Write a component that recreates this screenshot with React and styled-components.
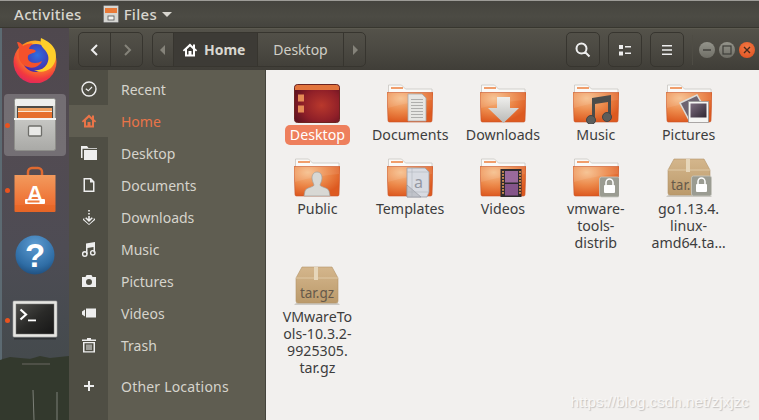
import React from 'react';
import styled, { createGlobalStyle } from 'styled-components';

const Global = createGlobalStyle`
  html, body { margin: 0; padding: 0; width: 759px; height: 420px; overflow: hidden; background: #f2f0ee; }
  * { box-sizing: border-box; }
  body { font-family: "Noto Sans", "DejaVu Sans", sans-serif; }
`;

const Screen = styled.div`
  position: relative; width: 759px; height: 420px; display: flex; flex-direction: column; overflow: hidden;
`;
const TopBar = styled.div`
  height: 28px; flex: none; display: flex; align-items: center; padding: 0 0 0 14px;
  background: linear-gradient(#45443f, #4c4b44 60%, #45443e);
  border-top: 1px solid #9d9c98; border-bottom: 1px solid #38372f;
  color: #d8d6cf; font-size: 15px; font-weight: 500; letter-spacing: .3px;
`;
const TopLabel = styled.span` margin-right: ${p => p.$gap || 0}px; `;
const TopIcon = styled.svg` margin-right: 5px; flex: none; `;
const Caret = styled.span`
  width: 0; height: 0; margin-left: 5px; border: 5px solid transparent; border-top: 5px solid #d8d6cf; border-bottom: 0;
`;
const Main = styled.div` flex: 1; display: flex; min-height: 0; `;
const Dock = styled.div`
  position: relative; width: 69px; flex: none; display: flex; flex-direction: column; align-items: center; padding-top: 1px;
  background: linear-gradient(#4f484e 0, #524b52 120px, #4e4c54 220px, #474b50 290px, #454a4d 330px, #2f352c 334px, #2d3329 392px);
  border-left: 2px solid #5c6a72;
`;
const DockItem = styled.div`
  position: relative; width: 62px; height: 62px; margin-bottom: 3px; margin-left: -1px; border-radius: 4px; display: flex; align-items: center; justify-content: center; z-index: 1;
  background: ${p => p.$active ? 'rgba(255,255,255,.2)' : 'transparent'};
`;
const Dot = styled.span`
  position: absolute; left: 1px; top: 29px; width: 5px; height: 5px; border-radius: 50%; background: #e9531f;
`;
const Wallpaper = styled.svg` position: absolute; left: -2px; bottom: 0; `;
const Window = styled.div` flex: 1; display: flex; flex-direction: column; min-width: 0; `;
const Header = styled.div`
  height: 42px; flex: none; display: flex; align-items: center; padding: 0 0 0 9px; 
  background: linear-gradient(#54524a, #4c4a43 45%, #403e38);
  border-top: 1px solid #5c5a50;
`;
const Group = styled.div`
  display: flex; height: 35px; border: 1px solid #37352f; border-radius: 5px; margin-right: ${p => p.$mr || 0}px; overflow: hidden;
`;
const Seg = styled.div`
  width: ${p => p.$w}px; display: flex; align-items: center; justify-content: ${p => p.$start ? 'flex-start' : 'center'}; gap: 6px;
  padding-left: ${p => p.$start ? 8 : 0}px;
  border-right: ${p => p.$last ? 0 : '1px solid #37352f'};
  color: ${p => p.$color || '#d9d7d0'}; font-size: 14px; font-weight: ${p => p.$bold ? 700 : 400};
  background: ${p => p.$active ? '#3d3b36' : 'transparent'};
`;
const Separator = styled.div` width: 1px; height: 30px; background: #4e4c44; margin: 0 6px 0 0; `;
const Controls = styled.div` display: flex; align-items: center; gap: 4px; margin-left: 0; `;
const Ctl = styled.div`
  width: 16px; height: 16px; border-radius: 50%; display: flex; align-items: center; justify-content: center;
  background: ${p => p.$close ? 'radial-gradient(circle at 50% 35%, #f47a45, #dd4d1d)' : 'linear-gradient(#94948b, #6f6e66)'};
`;
const Body = styled.div` flex: 1; display: flex; min-height: 0; `;
const Sidebar = styled.div`
  width: 197px; flex: none; display: flex; flex-direction: column; padding-top: 3px;
  background: linear-gradient(90deg, #4f4e44 0 39px, #5f5d51 39px 196px, #45443c 196px);
`;
const Row = styled.div`
  height: 32px; flex: none; display: flex; align-items: center; margin-top: ${p => p.$mt || 0}px; margin-right: 1px;
  color: ${p => p.$active ? '#ea7448' : '#d6d4cc'}; font-size: 14px; letter-spacing: ${p => p.$wide ? '.2px' : '0'};
`;
const RowIcon = styled.div`
  width: 39px; height: 100%; flex: none; display: flex; align-items: center; justify-content: center;
  background: ${p => p.$active ? '#5f5d51' : 'transparent'};
`;
const RowLabel = styled.span` margin-left: 13px; `;
const Files = styled.div`
  flex: 1; background: #f2f0ee; padding: 14px 0 0 5px; display: grid; grid-template-columns: repeat(5, 92.8px); align-content: start; align-items: start;
`;
const Cell = styled.div` display: flex; flex-direction: column; align-items: center; padding-bottom: 15px; `;
const IconBox = styled.div` width: 46px; height: 40px; margin-bottom: 2px; `;
const Label = styled.div`
  font-size: 14.200px; line-height: 17px; text-align: center; white-space: pre-line; color: ${p => p.$sel ? '#fff' : '#3d3d3d'};
  ${p => p.$sel ? 'background: #ee7f5c; border-radius: 5px; padding: 1px 5px 2px; margin: -1px 0 -2px;' : ''}
`;
const Watermark = styled.div`
  position: absolute; right: 10px; top: 393px; font-family: "Liberation Sans", sans-serif; font-size: 15.300px; color: #f8f7f6;
  text-shadow: 1px 1px 1px #c4c2c0;
`;

const HomeGlyph = ({ c = '#fff', s = 16 }) => (
  <svg width={s} height={s} viewBox="0 0 16 16"><path d="M8 1.500 0.800 8.200 2 9.400l1-.9V14.500h10V8.500l1 .9 1.200-1.200L13 6.300V2.500h-2v2ZM5 7.200 8 4.400l3 2.800v5.300H9.500V9h-3v3.500H5Z" fill={c} fillRule="evenodd" /></svg>
);

const sidebarIcons = {
  Recent: <svg width="16" height="16" viewBox="0 0 16 16"><circle cx="8" cy="8" r="7" fill="none" stroke="#eee" strokeWidth="1.400" /><path d="M4.800 7.800 7.300 9.800 11 6" fill="none" stroke="#eee" strokeWidth="1.200" /></svg>,
  Home: <HomeGlyph c="#ea7448" />,
  Desktop: <svg width="16" height="16" viewBox="0 0 16 16"><path d="M0 1h6l1.500 2H16v12H3V5h13V3.800H1.500V13H0Z" fill="#eee" /></svg>,
  Documents: <svg width="16" height="16" viewBox="0 0 16 16"><path d="M2.500 1H10l3.500 3.500V15h-11ZM4 2.500v11h8V5.500H9V2.500Z" fill="#eee" fillRule="evenodd" /></svg>,
  Downloads: <svg width="16" height="16" viewBox="0 0 16 16"><path d="M7.200 1h1.600v1.500H7.200ZM7.200 4h1.600v1.500H7.200ZM7.200 7h1.600v3l2-1.800 1 1L8 13 4.200 9.200l1-1 2 1.800ZM2 10l1.200-1-0 1.500L8 15l4.800-4.500V9L14 10v1L8 16 2 11Z" fill="#eee" /></svg>,
  Music: <svg width="16" height="16" viewBox="0 0 16 16"><path d="M5 2.500 14 1v10.500h-1.500V6L6.500 7v6H5Z" fill="#eee" /><circle cx="3.800" cy="13" r="2.200" fill="none" stroke="#eee" strokeWidth="1.400" /><circle cx="11.800" cy="11.800" r="2.200" fill="none" stroke="#eee" strokeWidth="1.400" /></svg>,
  Pictures: <svg width="16" height="16" viewBox="0 0 16 16"><path d="M5.500 2h5l1 2H15v10H1V4h3.500ZM8 6a3 3 0 1 0 0 6 3 3 0 0 0 0-6Z" fill="#eee" fillRule="evenodd" /></svg>,
  Videos: <svg width="16" height="16" viewBox="0 0 16 16"><path d="M5 3.500h10v9H5ZM1 6.500l3-2v7l-3-2Z" fill="#eee" /></svg>,
  Trash: <svg width="16" height="16" viewBox="0 0 16 16"><path d="M1 2.500h5V1h4v1.500h5V4H1ZM2 5h12v10.500H2ZM3.500 6.300v8h9v-8ZM5.500 7.500h1v5.500h-1ZM7.500 7.500h1v5.500h-1ZM9.500 7.500h1v5.500h-1Z" fill="#eee" fillRule="evenodd" /></svg>,
  Other: <svg width="16" height="16" viewBox="0 0 16 16"><path d="M7 3h2v4h4v2H9v4H7V9H3V7h4Z" fill="#eee" /></svg>,
};

const sidebar = ['Recent', 'Home', 'Desktop', 'Documents', 'Downloads', 'Music', 'Pictures', 'Videos', 'Trash'];

const Lock = () => (
  <g>
    <rect x="26.500" y="19" width="20" height="20" rx="2" fill="#9b9c92" stroke="#c9c9c1" strokeWidth=".8" />
    <path d="M33 27v-2.500a3.500 3.500 0 0 1 7 0V27" fill="none" stroke="#fff" strokeWidth="1.500" />
    <rect x="31" y="27" width="11" height="8" rx="1" fill="#fff" />
  </g>
);

const overlays = {
  documents: (
    <g>
      <path d="M21 10h14l4 4v23H21Z" fill="#e6e6e4" stroke="#aaa" strokeWidth=".8" />
      {[15, 18, 21, 24, 27, 30, 33].map(y => <rect key={y} x="24" y={y} width="12" height=".9" fill="#a8a8a6" />)}
    </g>
  ),
  downloads: <path d="M17 13h13v11h9L23.500 39 8 24h9Z" fill="url(#arrowG)" />,
  music: (
    <g fill="#4c4c4a">
      <path d="M19 14 38 11v22h-3V18l-13 2v16h-3Z" />
      <circle cx="18" cy="36" r="4.500" fill="#5d5d5a" stroke="#444" />
      <circle cx="34" cy="33" r="4.500" fill="#5d5d5a" stroke="#444" />
    </g>
  ),
  pictures: (
    <g>
      <path d="M14 19 31 11l9 16-17 9Z" fill="#6e6471" stroke="#dcdcd8" strokeWidth="1.500" />
      <rect x="22.500" y="17.500" width="20" height="21" fill="#f5f5f3" stroke="#999" strokeWidth=".8" />
      <rect x="24.500" y="19.500" width="16" height="14" fill="url(#picG)" />
    </g>
  ),
  public: (
    <g>
      <path d="M23 14c3.500 0 5 3 5 6 0 3-1.500 5-2 7 0 2 8 2.500 9 6l1 5H10l1-5c1-3.500 9-4 9-6-.5-2-2-4-2-7 0-3 1.500-6 5-6Z" fill="#d8d8d4" stroke="#a0a09c" strokeWidth=".7" />
    </g>
  ),
  templates: (
    <g>
      <path d="M20 10h18l4 4v20l-2 5H20Z" fill="#d8dbe2" stroke="#9da0a8" strokeWidth=".8" />
      <path d="M20 27 34 39H20Z" fill="#c0c3ca" stroke="#8f929a" strokeWidth=".6" />
      <path d="M25 10v29M20 14h22M20 34h22" stroke="#a9acb4" strokeWidth=".5" />
      <text x="27" y="30" fontFamily="Noto Sans" fontSize="16" fill="#9498a2">a</text>
    </g>
  ),
  videos: (
    <g>
      <rect x="20.500" y="11" width="21" height="28" fill="#2f2b2e" />
      <rect x="25" y="13" width="13" height="11.500" fill="#9a6a9c" />
      <rect x="25" y="26" width="13" height="11.500" fill="#85558a" />
      {[13, 16, 19, 22, 25, 28, 31, 34].map(y => <React.Fragment key={y}><rect x="22" y={y} width="2" height="1.800" fill="#c88a50" /><rect x="39" y={y} width="2" height="1.800" fill="#c88a50" /></React.Fragment>)}
    </g>
  ),
  lock: <Lock />,
};

const Folder = ({ kind, id }) => (
  <svg width="46" height="40" viewBox="0 0 46 40">
    <defs>
      <radialGradient id={`f${id}`} cx="30%" cy="20%" r="80%">
        <stop offset="0" stopColor="#f6bf8c" />
        <stop offset=".55" stopColor="#ec8849" />
        <stop offset="1" stopColor="#dd5a20" />
      </radialGradient>
      <linearGradient id="arrowG" x1="0" y1="0" x2="0" y2="1"><stop offset="0" stopColor="#efefed" /><stop offset="1" stopColor="#b9b9b6" /></linearGradient>
      <linearGradient id="picG" x1="0" y1="0" x2="1" y2="1"><stop offset="0" stopColor="#7e6e80" /><stop offset="1" stopColor="#2f2732" /></linearGradient>
    </defs>
    <path d="M1.500 1h13l4 4H45v7H1.500Z" fill="#fbfaf8" stroke="#c9c6c2" strokeWidth=".8" />
    <rect x="4" y="3" width="12" height="2" fill="#f09e6c" />
    <path d="M0 8.500h46l-1 28a1.500 1.500 0 0 1-1.500 1.500h-41A1.500 1.500 0 0 1 1 36.500Z" fill={`url(#f${id})`} stroke="#c9552a" strokeWidth=".6" />
    <path d="M1 24q20-6 44-8v-7H1Z" fill="#fff" opacity=".09" />
    {overlays[kind]}
  </svg>
);

const DesktopIcon = () => (
  <svg width="46" height="40" viewBox="0 0 46 40">
    <defs>
      <radialGradient id="deskG" cx="60%" cy="55%" r="70%"><stop offset="0" stopColor="#b9382c" /><stop offset=".6" stopColor="#8f1f28" /><stop offset="1" stopColor="#5c1120" /></radialGradient>
    </defs>
    <rect x=".5" y=".5" width="45" height="38" rx="3" fill="url(#deskG)" stroke="#6d2420" />
    <path d="M1 3.500A2.500 2.500 0 0 1 3.500 1h39A2.500 2.500 0 0 1 45 3.500V6H1Z" fill="#e2743c" />
    <rect x="4" y="10.500" width="6" height="7" fill="#e58a55" />
    <rect x="4" y="21.500" width="6" height="7" fill="#e58a55" />
  </svg>
);

const Tar = ({ locked, id }) => (
  <svg width="46" height="40" viewBox="0 0 46 40">
    <defs>
      <linearGradient id={`t${id}`} x1="0" y1="0" x2="0" y2="1"><stop offset="0" stopColor="#d4b68c" /><stop offset="1" stopColor="#bb9a6b" /></linearGradient>
    </defs>
    <path d="M2 37h42l2 2H0Z" fill="#ccc9c4" />
    <path d="M8 1h30l6 11v23a2 2 0 0 1-2 2H4a2 2 0 0 1-2-2V12Z" fill={`url(#t${id})`} stroke="#b19468" strokeWidth=".6" />
    <path d="M2 12h42" stroke="#e3cfae" strokeWidth=".8" />
    <rect x="20" y="1" width="4" height="13" fill="#e6d6ba" />
    <text x={locked ? 5 : 23} y="32" textAnchor={locked ? 'start' : 'middle'} fontFamily="Noto Sans" fontSize="13.500" fill="#66594a">{locked ? 'tar.' : 'tar.gz'}</text>
    {locked && <g transform="translate(-1 -1)"><Lock /></g>}
  </svg>
);

const items = [
  { n: 'Desktop', sel: true, icon: <DesktopIcon /> },
  { n: 'Documents', icon: <Folder kind="documents" id="a" /> },
  { n: 'Downloads', icon: <Folder kind="downloads" id="b" /> },
  { n: 'Music', icon: <Folder kind="music" id="c" /> },
  { n: 'Pictures', icon: <Folder kind="pictures" id="d" /> },
  { n: 'Public', icon: <Folder kind="public" id="e" /> },
  { n: 'Templates', icon: <Folder kind="templates" id="f" /> },
  { n: 'Videos', icon: <Folder kind="videos" id="g" /> },
  { n: 'vmware-\ntools-\ndistrib', icon: <Folder kind="lock" id="h" /> },
  { n: 'go1.13.4.\nlinux-\namd64.ta…', icon: <Tar locked id="i" /> },
  { n: 'VMwareTo\nols-10.3.2-\n9925305.\ntar.gz', icon: <Tar id="j" /> },
];

const Firefox = () => (
  <svg width="46" height="46" viewBox="0 0 46 46">
    <defs>
      <radialGradient id="ffo" cx="60%" cy="25%" r="85%"><stop offset="0" stopColor="#ffe13a" /><stop offset=".4" stopColor="#ff9a1f" /><stop offset=".75" stopColor="#f2393f" /><stop offset="1" stopColor="#d81f6d" /></radialGradient>
      <radialGradient id="ffb" cx="55%" cy="40%" r="70%"><stop offset="0" stopColor="#2f6fe0" /><stop offset="1" stopColor="#4b1fa0" /></radialGradient>
    </defs>
    <circle cx="23" cy="25" r="21.500" fill="url(#ffo)" />
    <circle cx="24" cy="21" r="14" fill="url(#ffb)" />
    <path d="M29 1c-1 5 0 8 3 11 4 4 6 9 3 15-3 5-8 7-13 6 5 3 12 2 17-2 5-5 6-12 4-18-2-5-7-9-14-12Z" fill="#ffcf2a" />
    <path d="M7 11 5 5c3 0 5 2 6 4 3-2 7-3 10-2-2 1-4 3-4 5 2 0 5 0 7 2-2 3-7 2-8 5-1 4 2 7 7 7 3 0 5-1 7-2-2 5-8 8-14 6C9 29 5 21 7 11Z" fill="#f4512c" />
  </svg>
);

const FilesIcon = () => (
  <svg width="42" height="54" viewBox="0 0 42 54">
    <defs><linearGradient id="cab" x1="0" y1="0" x2="0" y2="1"><stop offset="0" stopColor="#d9d9d6" /><stop offset="1" stopColor="#a9a9a6" /></linearGradient></defs>
    <rect x="0.500" y="0.500" width="41" height="52" rx="2" fill="url(#cab)" stroke="#8e8e8a" />
    <rect x="1" y="1" width="40" height="7" rx="1.500" fill="#eeeeec" />
    <rect x="3" y="8" width="36" height="12" fill="#4d4a46" />
    <rect x="4" y="10" width="34" height="3" fill="#f0a060" />
    <rect x="4" y="13" width="34" height="1" fill="#fbe6d2" />
    <rect x="4" y="14" width="34" height="6" fill="#e66f2d" />
    <rect x="0" y="20" width="42" height="2" fill="#f4f4f2" />
    <rect x="14.500" y="28" width="13" height="10" rx="1" fill="#e9e9e7" stroke="#6e6e6a" strokeWidth="1.300" />
  </svg>
);

const StoreIcon = () => (
  <svg width="44" height="48" viewBox="0 0 44 48">
    <defs><linearGradient id="bag" x1="0" y1="0" x2="0" y2="1"><stop offset="0" stopColor="#f29a5d" /><stop offset=".8" stopColor="#ee6f32" /><stop offset=".8" stopColor="#e96a2a" /><stop offset="1" stopColor="#e66526" /></linearGradient></defs>
    <path d="M15 10V6a4 4 0 0 1 4-4h6a4 4 0 0 1 4 4v4" fill="none" stroke="#e06a30" strokeWidth="2.500" />
    <path d="M1.500 9h41v36a1 1 0 0 1-1 1h-39a1 1 0 0 1-1-1Z" fill="url(#bag)" />
    <text x="22" y="35" textAnchor="middle" fontFamily="Liberation Sans" fontWeight="700" fontSize="22" fill="#fff">A</text>
    <rect x="12" y="33" width="20" height="5" rx="1" fill="#fff" />
    <rect x="14.500" y="34.500" width="12" height="2" fill="#ef7a3c" />
  </svg>
);

const HelpIcon = () => (
  <svg width="42" height="42" viewBox="0 0 42 42">
    <defs><radialGradient id="hp" cx="50%" cy="25%" r="80%"><stop offset="0" stopColor="#5d9cd2" /><stop offset=".7" stopColor="#2f6da5" /><stop offset="1" stopColor="#1d4a78" /></radialGradient></defs>
    <circle cx="21" cy="21" r="19.500" fill="url(#hp)" />
    <text x="21" y="33" textAnchor="middle" fontFamily="Liberation Sans" fontWeight="700" fontSize="33" fill="#fff">?</text>
  </svg>
);

const TerminalIcon = () => (
  <svg width="46" height="40" viewBox="0 0 46 40">
    <defs><linearGradient id="tm" x1="0" y1="0" x2="1" y2="1"><stop offset="0" stopColor="#4f4f4c" /><stop offset=".5" stopColor="#2a2a28" /><stop offset="1" stopColor="#161616" /></linearGradient></defs>
    <rect x="1" y="1" width="44" height="36" rx="1" fill="#e6e6e2" stroke="#aaa" strokeWidth=".6" />
    <rect x="4" y="4" width="38" height="30" fill="url(#tm)" stroke="#777" strokeWidth=".5" />
    <path d="M8.500 9.500 14 14.500l-5.500 5" fill="none" stroke="#fff" strokeWidth="2.200" />
    <rect x="16" y="19.500" width="8" height="1.800" fill="#fff" />
    <rect x="2" y="38" width="42" height="1.500" fill="#000" opacity=".3" />
  </svg>
);

const Small = ({ d, w = 16, sw, fill = 'none', c = '#eee' }) => (
  <svg width={w} height={w} viewBox="0 0 16 16"><path d={d} fill={fill} stroke={fill === 'none' ? c : 'none'} strokeWidth={sw} /></svg>
);

export default function App() {
  return (
    <Screen>
      <Global />
      <TopBar>
        <TopLabel $gap={21}>Activities</TopLabel>
        <TopIcon width="16" height="18" viewBox="0 0 16 18">
          <rect x=".5" y=".5" width="15" height="17" rx="1" fill="#d6d6d2" stroke="#777" />
          <rect x="2" y="3" width="12" height="5" fill="#e97a38" />
          <rect x="5" y="11" width="6" height="4" fill="#f2f2f0" stroke="#555" strokeWidth=".8" />
        </TopIcon>
        <TopLabel>Files</TopLabel>
        <Caret />
      </TopBar>
      <Main>
        <Dock>
          <Wallpaper width="69" height="92" viewBox="0 0 69 92">
            <path d="M0 32 10 29 30 31 40 28 50 30 69 28V92H0Z" fill="#33392d" />
            <path d="M22 35h28v2H22Z" fill="#4e5047" />
            <path d="M33 62 34 92M57 64V92" stroke="#7d8078" strokeWidth="1" />
          </Wallpaper>
          <DockItem><Firefox /></DockItem>
          <DockItem $active><Dot /><FilesIcon /></DockItem>
          <DockItem><Dot /><StoreIcon /></DockItem>
          <DockItem><HelpIcon /></DockItem>
          <DockItem><Dot /><TerminalIcon /></DockItem>
        </Dock>
        <Window>
          <Header>
            <Group $mr={9}>
              <Seg $w={32}><Small d="M10 3 5 8l5 5" sw={2} /></Seg>
              <Seg $w={31} $last><Small d="M6 3l5 5-5 5" sw={2} c="#85837a" /></Seg>
            </Group>
            <Group $mr={200}>
              <Seg $w={21}><Small fill="#85837a" d="M10 3v10L5 8Z" /></Seg>
              <Seg $w={84} $bold $active $start><HomeGlyph /><span>Home</span></Seg>
              <Seg $w={86} $color="#d0cec6">Desktop</Seg>
              <Seg $w={21} $last><Small fill="#85837a" d="M6 3v10l5-5Z" /></Seg>
            </Group>
            <Group $mr={8}><Seg $w={32} $last><Small d="M6.500 1.500a5 5 0 1 1 0 10 5 5 0 0 1 0-10ZM10 10l4.500 4.500" sw={2} /></Seg></Group>
            <Group $mr={8}><Seg $w={32} $last><Small fill="#eee" d="M2 3h4v4H2ZM8 4h6v1.500H8ZM2 9.500h4v4H2ZM8 10.500h6V12H8Z" /></Seg></Group>
            <Group $mr={8}><Seg $w={32} $last><Small fill="#eee" d="M3 3h10v1.600H3ZM3 7.200h10v1.600H3ZM3 11.400h10V13H3Z" /></Seg></Group>
            <Separator />
            <Controls>
              <Ctl><svg width="10" height="10" viewBox="0 0 10 10"><rect x="1" y="4.300" width="8" height="1.400" fill="#3f3e39" /></svg></Ctl>
              <Ctl><svg width="10" height="10" viewBox="0 0 10 10"><rect x="1" y="1" width="8" height="8" fill="none" stroke="#3f3e39" strokeWidth="1.200" /></svg></Ctl>
              <Ctl $close><svg width="10" height="10" viewBox="0 0 10 10"><path d="M2 2l6 6M8 2l-6 6" stroke="#4a2a1c" strokeWidth="1.400" /></svg></Ctl>
            </Controls>
          </Header>
          <Body>
            <Sidebar>
              {sidebar.map(k => (
                <Row key={k} $active={k === 'Home'}>
                  <RowIcon $active={k === 'Home'}>{sidebarIcons[k]}</RowIcon>
                  <RowLabel>{k}</RowLabel>
                </Row>
              ))}
              <Row $mt={9} $wide>
                <RowIcon>{sidebarIcons.Other}</RowIcon>
                <RowLabel>Other Locations</RowLabel>
              </Row>
            </Sidebar>
            <Files>
              {items.map(it => (
                <Cell key={it.n}>
                  <IconBox>{it.icon}</IconBox>
                  <Label $sel={it.sel}>{it.n}</Label>
                </Cell>
              ))}
            </Files>
          </Body>
        </Window>
      </Main>
      <Watermark>https://blog.csdn.net/zjxjzc</Watermark>
    </Screen>
  );
}
